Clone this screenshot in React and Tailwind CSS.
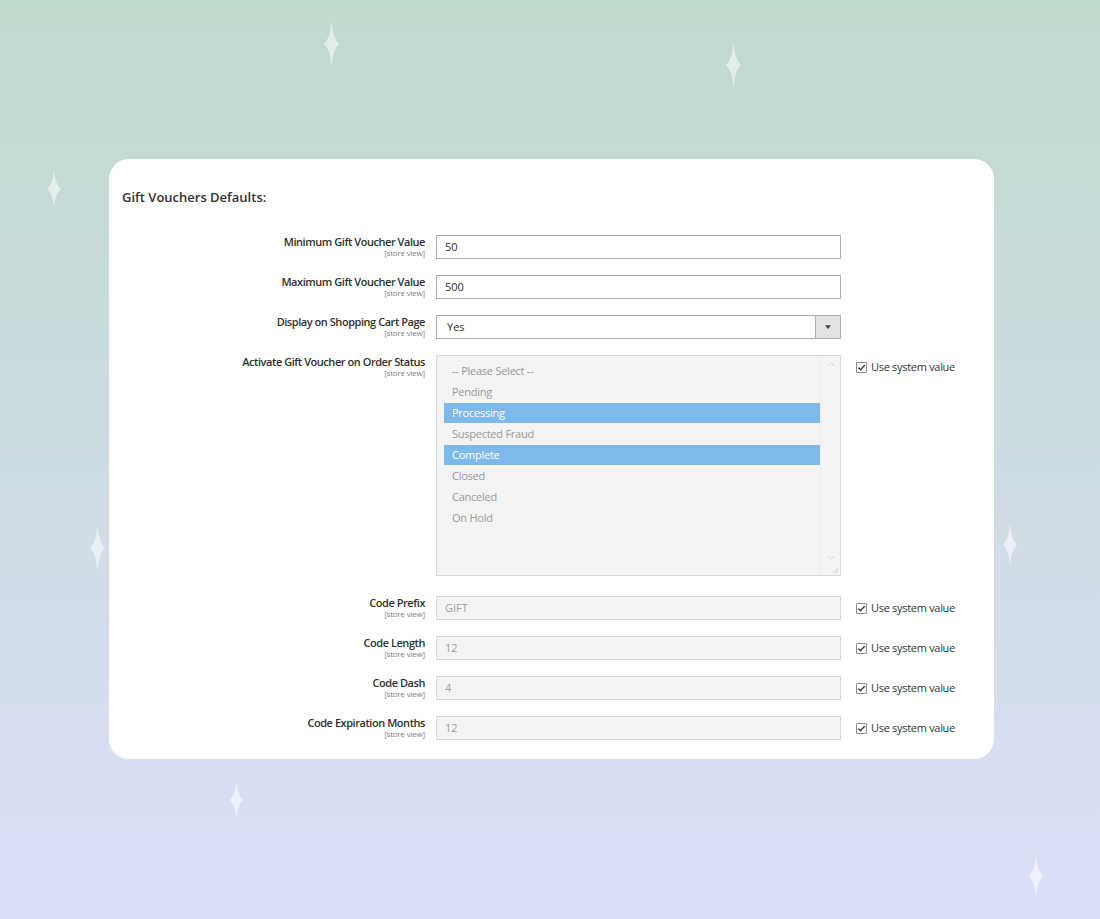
import React from 'react';

const sparkles = [
	{ x: 331, y: 44, h: 46, w: 15 },
	{ x: 733, y: 65, h: 46, w: 15 },
	{ x: 54, y: 189, h: 38, w: 14 },
	{ x: 97, y: 548, h: 48, w: 15 },
	{ x: 1010, y: 545, h: 44, w: 14 },
	{ x: 236, y: 800, h: 40, w: 13 },
	{ x: 1036, y: 876, h: 44, w: 14 },
];

const Sparkle = ({ x, y, h, w }) => (
	<svg
		className="absolute"
		style={{ left: x - w / 2, top: y - h / 2, width: w, height: h }}
		viewBox="0 0 14 46"
		preserveAspectRatio="none"
	>
		<path d="M7 0 Q8 17 14 23 Q8 29 7 46 Q6 29 0 23 Q6 17 7 0 Z" fill="rgba(255,255,255,0.55)" />
	</svg>
);

const Checkbox = () => (
	<label className="flex items-center gap-[4px] text-[11px] tracking-[-0.3px] text-[#333]">
		<span className="flex h-[11px] w-[11px] items-center justify-center rounded-[1px] border border-[#8a8a8a] bg-white">
			<svg viewBox="0 0 10 10" className="h-[9px] w-[9px]">
				<path d="M1.6 5.2 L4 7.6 L8.6 2.2" fill="none" stroke="#333" strokeWidth="1.5" />
			</svg>
		</span>
		Use system value
	</label>
);

const Label = ({ text }) => (
	<div className="w-[316px] shrink-0 pt-[1px] text-right">
		<div className="text-[11px] font-semibold leading-[12px] tracking-[-0.45px] text-[#303030]">{text}</div>
		<div className="text-[8px] leading-[9px] tracking-[-0.2px] text-[#808080]">[store view]</div>
	</div>
);

const TextRow = ({ label, value, disabled }) => (
	<div className="flex items-start">
		<Label text={label} />
		<div
			className={
				disabled
					? 'ml-[11px] flex h-[24px] w-[405px] items-center border border-[#d6d6d6] bg-[#f3f3f3] px-[8px] text-[11px] text-[#a0a0a0]'
					: 'ml-[11px] flex h-[24px] w-[405px] items-center border border-[#adadad] bg-white px-[8px] text-[11px] text-[#303030]'
			}
		>
			{value}
		</div>
		{disabled && (
			<div className="ml-[15px] flex h-[24px] items-center">
				<Checkbox />
			</div>
		)}
	</div>
);

const options = [
	{ t: '-- Please Select --' },
	{ t: 'Pending' },
	{ t: 'Processing', sel: true },
	{ t: 'Suspected Fraud' },
	{ t: 'Complete', sel: true },
	{ t: 'Closed' },
	{ t: 'Canceled' },
	{ t: 'On Hold' },
];

export default function App() {
	return (
		<div
			className="relative min-h-[919px] w-full overflow-hidden bg-gradient-to-b from-[#c0d9cd] to-[#dcdff8] pl-[109px] pt-[159px]"
			style={{ fontFamily: '"Open Sans", "Noto Sans", sans-serif' }}
		>
			{sparkles.map((s, i) => (
				<Sparkle key={i} {...s} />
			))}
			<div className="relative h-[600px] w-[885px] rounded-[20px] bg-white">
				<h2 className="pl-[13px] pt-[29px] text-[13px] font-semibold leading-[18px] text-[#303030]">
					Gift Vouchers Defaults:
				</h2>
				<div className="mt-[29px] flex flex-col gap-[16px]">
					<TextRow label="Minimum Gift Voucher Value" value="50" />
					<TextRow label="Maximum Gift Voucher Value" value="500" />
					<div className="flex items-start">
						<Label text="Display on Shopping Cart Page" />
						<div className="ml-[11px] flex h-[24px] w-[405px] items-center border border-[#adadad] bg-white text-[11px] text-[#303030]">
							<span className="flex-1 pl-[10px]">Yes</span>
							<span className="flex h-full w-[25px] items-center justify-center border-l border-[#adadad] bg-[#e3e3e3]">
								<svg viewBox="0 0 8 5" className="h-[4px] w-[6px]">
									<path d="M0 0 L8 0 L4 5 Z" fill="#444" />
								</svg>
							</span>
						</div>
					</div>
					<div className="flex items-start">
						<Label text="Activate Gift Voucher on Order Status" />
						<div className="relative ml-[11px] flex h-[221px] w-[405px] border border-[#d6d6d6] bg-[#f3f3f3]">
							<div className="flex-1 pl-[7px] pt-[4px]">
								{options.map((o) => (
									<div
										key={o.t}
										className={
											o.sel
												? 'my-[1px] flex h-[20px] items-center bg-[#7fb8ea] pl-[8px] text-[11px] tracking-[-0.25px] text-white'
												: 'my-[1px] flex h-[20px] items-center pl-[8px] text-[11px] tracking-[-0.25px] text-[#9a9a9a]'
										}
									>
										{o.t}
									</div>
								))}
							</div>
							<div className="relative w-[20px] border-l border-[#ebebeb]">
								<svg viewBox="0 0 8 5" className="absolute left-[7px] top-[6px] h-[4px] w-[6px]">
									<path d="M0 5 L4 1 L8 5" fill="none" stroke="#c8c8c8" strokeWidth="1" />
								</svg>
								<svg viewBox="0 0 8 5" className="absolute left-[7px] top-[200px] h-[4px] w-[6px]">
									<path d="M0 0 L4 4 L8 0" fill="none" stroke="#c8c8c8" strokeWidth="1" />
								</svg>
								<svg viewBox="0 0 6 6" className="absolute bottom-[2px] right-[2px] h-[6px] w-[6px]">
									<path d="M6 1 L1 6 M6 4 L4 6" stroke="#c0c0c0" strokeWidth="0.8" />
								</svg>
							</div>
						</div>
						<div className="ml-[15px] flex h-[24px] items-center">
							<Checkbox />
						</div>
					</div>
					<div className="mt-[4px] flex flex-col gap-[16px]">
						<TextRow label="Code Prefix" value="GIFT" disabled />
						<TextRow label="Code Length" value="12" disabled />
						<TextRow label="Code Dash" value="4" disabled />
						<TextRow label="Code Expiration Months" value="12" disabled />
					</div>
				</div>
			</div>
		</div>
	);
}
